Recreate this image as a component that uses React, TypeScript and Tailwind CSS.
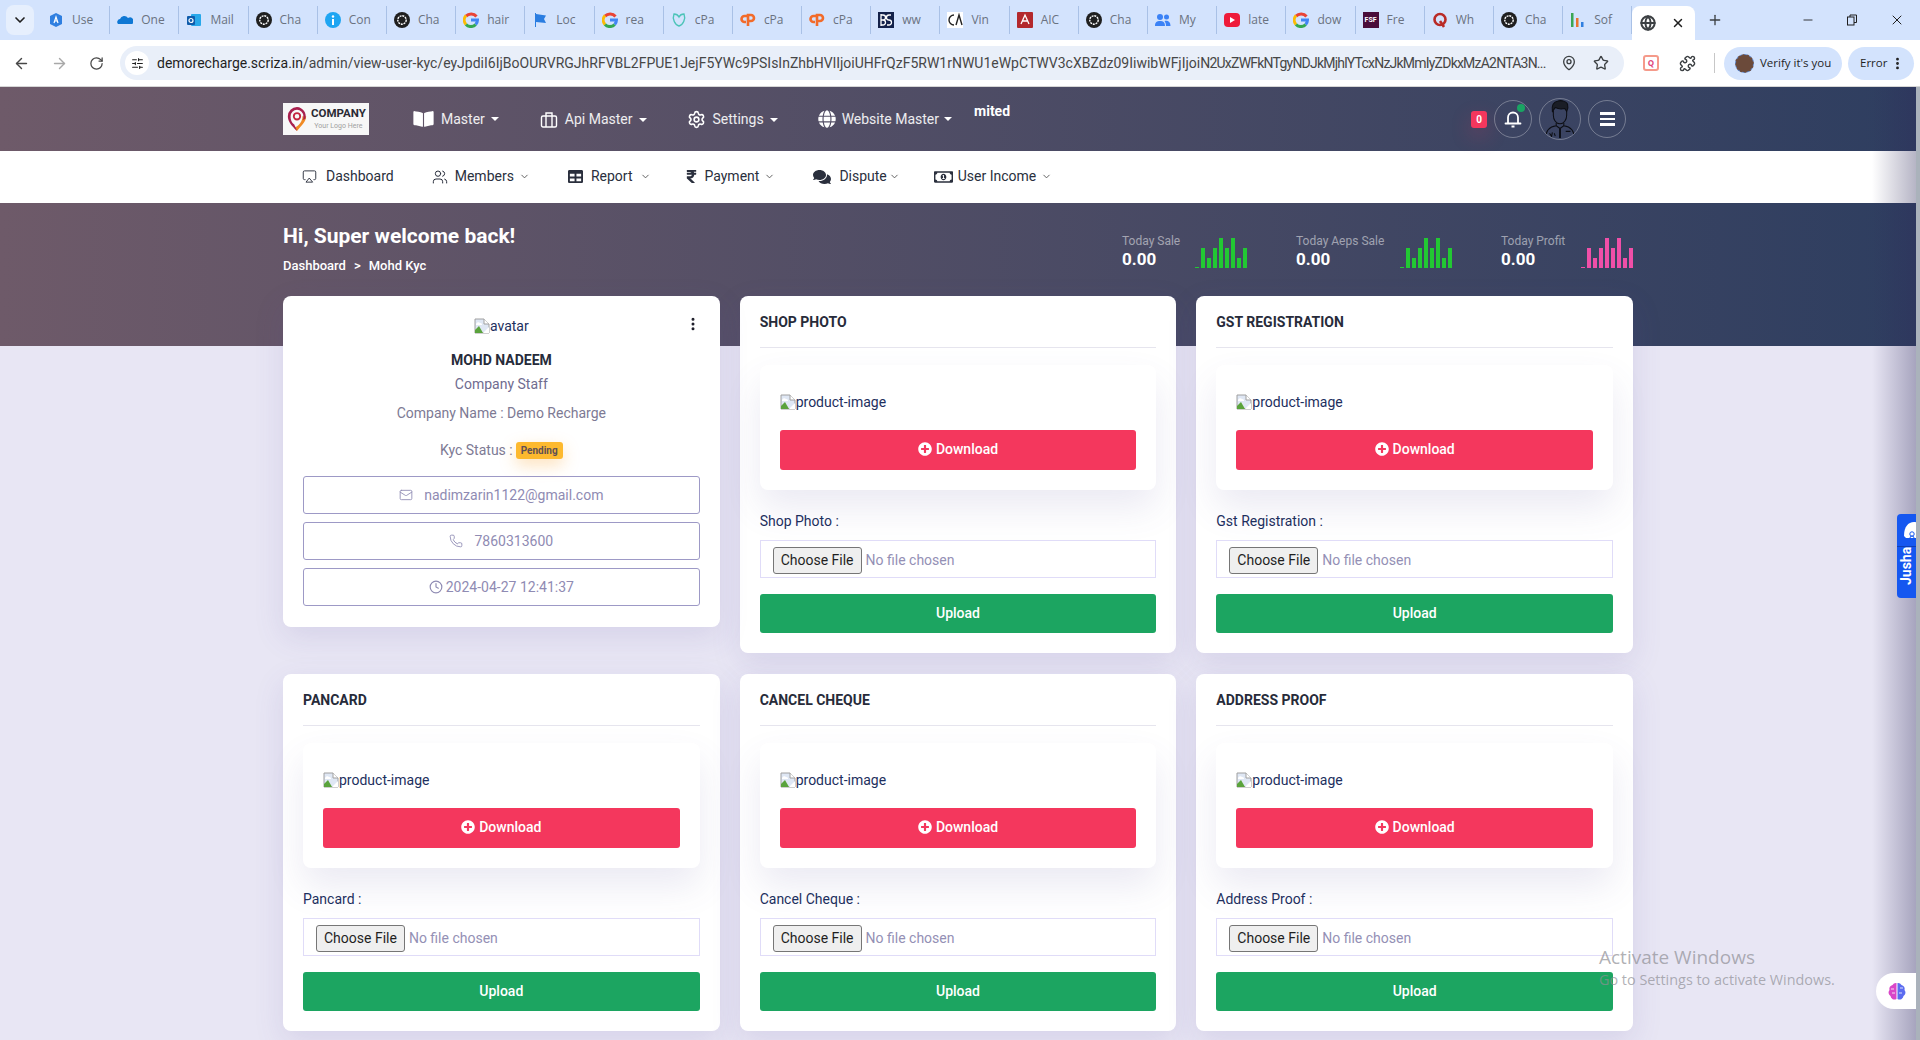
import { ReactNode } from "react";
import {
  Airplay,
  ArrowLeft,
  ArrowRight,
  ChevronDown,
  Clock,
  EllipsisVertical,
  Globe,
  Mail,
  MapPin,
  Minus,
  Phone,
  Plus,
  Puzzle,
  RotateCw,
  Settings,
  SlidersHorizontal,
  Star,
  Users,
  X,
} from "lucide-react";
import {
  FaBookOpen,
  FaComments,
  FaGlobe,
  FaPlusCircle,
  FaRegMoneyBillAlt,
  FaRupeeSign,
  FaTable,
} from "react-icons/fa";

type TabKind =
  | "azure" | "cloud" | "outlook" | "chat" | "info" | "google" | "flag" | "teal" | "cpanel"
  | "bs" | "vinc" | "aica" | "people" | "yt" | "fsf" | "quora" | "bars";

const tabs: { kind: TabKind; label: string }[] = [
  { kind: "azure", label: "Use" },
  { kind: "cloud", label: "One" },
  { kind: "outlook", label: "Mail" },
  { kind: "chat", label: "Cha" },
  { kind: "info", label: "Con" },
  { kind: "chat", label: "Cha" },
  { kind: "google", label: "hair" },
  { kind: "flag", label: "Loc" },
  { kind: "google", label: "rea" },
  { kind: "teal", label: "cPa" },
  { kind: "cpanel", label: "cPa" },
  { kind: "cpanel", label: "cPa" },
  { kind: "bs", label: "ww" },
  { kind: "vinc", label: "Vin" },
  { kind: "aica", label: "AIC" },
  { kind: "chat", label: "Cha" },
  { kind: "people", label: "My" },
  { kind: "yt", label: "late" },
  { kind: "google", label: "dow" },
  { kind: "fsf", label: "Fre" },
  { kind: "quora", label: "Wh" },
  { kind: "chat", label: "Cha" },
  { kind: "bars", label: "Sof" },
];

function Favicon({ kind }: { kind: TabKind }) {
  switch (kind) {
    case "azure":
      return (
        <svg viewBox="0 0 16 16" className="w-4 h-4">
          <path d="M8 1l6 3v8l-6 3-6-3V4z" fill="#2f7fe0" />
          <path d="M6 11l2-6 2 6M6.800 9h2.400" stroke="#fff" strokeWidth="1.200" fill="none" />
        </svg>
      );
    case "cloud":
      return (
        <svg viewBox="0 0 16 16" className="w-4 h-4">
          <path d="M1 12a3 3 0 012-5 4.500 4.500 0 018-1 3.500 3.500 0 014 6z" fill="#0f78d4" />
        </svg>
      );
    case "outlook":
      return (
        <svg viewBox="0 0 16 16" className="w-4 h-4">
          <rect x="5" y="2" width="10" height="12" rx="1" fill="#28a8ea" />
          <rect x="1" y="4" width="8" height="9" rx="1" fill="#0f5cab" />
          <circle cx="5" cy="8.500" r="2" fill="none" stroke="#fff" strokeWidth="1.200" />
        </svg>
      );
    case "chat":
      return (
        <svg viewBox="0 0 16 16" className="w-4 h-4">
          <circle cx="8" cy="8" r="8" fill="#1f1f1f" />
          <circle cx="8" cy="8" r="4.200" fill="none" stroke="#fff" strokeWidth="1.400" strokeDasharray="2 0.800" />
        </svg>
      );
    case "info":
      return (
        <svg viewBox="0 0 16 16" className="w-4 h-4">
          <circle cx="8" cy="8" r="8" fill="#1ea5f2" />
          <rect x="7" y="7" width="2" height="6" fill="#fff" />
          <circle cx="8" cy="4.500" r="1.200" fill="#fff" />
        </svg>
      );
    case "google":
      return (
        <svg viewBox="0 0 16 16" className="w-4 h-4" fill="none" strokeWidth="3">
          <path d="M13.500 4A7 7 0 003 3.600" stroke="#ea4335" transform="translate(0 .5)" />
          <path d="M3 3.600a6.500 6.500 0 000 8.800" stroke="#fbbc05" />
          <path d="M3 12.400a6.500 6.500 0 009.700 0" stroke="#34a853" />
          <path d="M12.700 12.400A6.500 6.500 0 0014.500 8H8" stroke="#4285f4" />
        </svg>
      );
    case "flag":
      return (
        <svg viewBox="0 0 16 16" className="w-4 h-4">
          <path d="M3 1h1v14H3zM4 2l10 1.500-2 3.500 2 4-10-1z" fill="#2a7de1" />
        </svg>
      );
    case "teal":
      return (
        <svg viewBox="0 0 16 16" className="w-4 h-4" fill="none" stroke="#4cc4b8" strokeWidth="1.400">
          <path d="M3 2c-2 5 1 11 5 12 4-1 7-7 5-12-2 0-4 1-5 3-1-2-3-3-5-3z" />
        </svg>
      );
    case "cpanel":
      return (
        <svg viewBox="0 0 16 16" className="w-4 h-4" fill="none" stroke="#f26b2a" strokeWidth="2.600">
          <path d="M7 4H4.500a3 3 0 000 6H6" />
          <path d="M8 14V3h3a3 3 0 010 6H9" />
        </svg>
      );
    case "bs":
      return (
        <svg viewBox="0 0 16 16" className="w-4 h-4">
          <rect width="16" height="16" fill="#14224a" />
          <path d="M3 2v12M3 3h2a2 2 0 010 5H3m0 0h2a2 2 0 010 5H3M13 3h-2a2 2 0 000 5 2 2 0 010 5H9" stroke="#fff" strokeWidth="1.300" fill="none" />
        </svg>
      );
    case "vinc":
      return (
        <svg viewBox="0 0 16 16" className="w-4 h-4">
          <rect width="16" height="16" fill="#fff" />
          <path d="M7 3a5 5 0 100 10M9 13l3-10 3 10" stroke="#222" strokeWidth="1.400" fill="none" />
        </svg>
      );
    case "aica":
      return (
        <svg viewBox="0 0 16 16" className="w-4 h-4">
          <rect width="16" height="16" rx="1" fill="#b3282d" />
          <path d="M4 12l4-9 4 9M5.500 9h5" stroke="#fff" strokeWidth="1.300" fill="none" />
        </svg>
      );
    case "people":
      return (
        <svg viewBox="0 0 16 16" className="w-4 h-4" fill="#3b82f6">
          <circle cx="5" cy="5" r="3" />
          <circle cx="11.500" cy="5" r="2.500" />
          <path d="M0 14c0-4 2-5 5-5s5 1 5 5zM11 14c0-2-.5-3.500-1.500-5 3-.8 6 .5 6 5z" />
        </svg>
      );
    case "yt":
      return (
        <svg viewBox="0 0 16 16" className="w-4 h-4">
          <rect y="1" width="16" height="14" rx="4" fill="#ee1b3a" />
          <path d="M6 5l5 3-5 3z" fill="#fff" />
        </svg>
      );
    case "fsf":
      return (
        <div className="w-4 h-4 bg-[#4a0d3a] text-white text-[7px] font-bold leading-4 text-center font-['Roboto',sans-serif]">FSF</div>
      );
    case "quora":
      return (
        <svg viewBox="0 0 16 16" className="w-4 h-4" fill="none" stroke="#b92b27" strokeWidth="2.600">
          <circle cx="8" cy="7.500" r="5.500" />
          <path d="M8 9l4 6" />
        </svg>
      );
    case "bars":
      return (
        <svg viewBox="0 0 16 16" className="w-4 h-4">
          <rect x="1" y="1" width="2.500" height="14" fill="#3aa655" />
          <rect x="6" y="6" width="2.500" height="9" fill="#e8742c" />
          <rect x="11" y="10" width="2.500" height="5" fill="#2f7fe0" />
        </svg>
      );
  }
}

function Tab({ kind, label }: { kind: TabKind; label: string }) {
  return (
    <div className="w-[69.200px] h-[28px] shrink-0 flex items-center gap-[8px] pl-[7px] border-r border-[#a9c1e6]">
      <div className="shrink-0 w-4 h-4">
        <Favicon kind={kind} />
      </div>
      <span className="text-[12px] text-[#6a7280] whitespace-nowrap">{label}</span>
    </div>
  );
}

function BrowserChrome() {
  return (
    <div className="font-['Open_Sans',sans-serif]">
      <div className="h-[40px] bg-[#d3e3fd] flex items-center">
        <div className="w-[28px] h-[30px] ml-[6px] mr-[7px] bg-[#e6effd] rounded-lg flex items-center justify-center">
          <ChevronDown className="w-4 h-4 text-[#1f1f1f]" strokeWidth={2.500} />
        </div>
        <div className="flex">
          {tabs.map((t, i) => (
            <Tab key={i} kind={t.kind} label={t.label} />
          ))}
        </div>
        <div className="mt-[6px] w-[63px] h-[34px] bg-white rounded-t-lg flex items-center pl-[8px] gap-[15px]">
          <Globe className="w-4 h-4 text-[#3c4043]" strokeWidth={3} />
          <X className="w-[14px] h-[14px] text-[#1f1f1f]" strokeWidth={2.500} />
        </div>
        <Plus className="ml-[12px] w-4 h-4 text-[#3c4043]" />
        <div className="ml-auto flex items-center gap-[31px] pr-[15px] text-[#1f1f1f]">
          <Minus className="w-[14px] h-[14px]" strokeWidth={1.500} />
          <svg viewBox="0 0 12 12" className="w-[12px] h-[12px]" fill="none" stroke="currentColor">
            <rect x="1.500" y="3" width="6.500" height="8" />
            <path d="M4 3V1h6.500v7.500H8" />
          </svg>
          <X className="w-4 h-4" strokeWidth={1.500} />
        </div>
      </div>
      <div className="h-[47px] bg-white flex items-center border-b border-[#d6d6d6]">
        <div className="w-[120px] shrink-0 flex items-center gap-[21px] pl-[13px] text-[#474747]">
          <ArrowLeft className="w-[17px] h-[17px]" strokeWidth={2} />
          <ArrowRight className="w-[17px] h-[17px] text-[#a8a8a8]" strokeWidth={2} />
          <RotateCw className="w-[15px] h-[15px]" strokeWidth={2} />
        </div>
        <div className="w-[1504px] h-[34px] bg-[#e9eff9] rounded-full flex items-center pl-[5px] pr-[14px]">
          <div className="w-[24px] h-[24px] rounded-full bg-white flex items-center justify-center shrink-0">
            <SlidersHorizontal className="w-[13px] h-[13px] text-[#1f1f1f]" />
          </div>
          <div className="ml-[8px] w-[1388px] shrink-0 text-[14px] text-[#1f1f1f] whitespace-nowrap font-['Roboto',sans-serif]">
            demorecharge.scriza.in<span className="text-[#474747]">/admin/view-user-kyc/eyJpdiI6IjBoOURVRGJhRFVBL2FPUE1JejF5YWc9PSIsInZhbHVlIjoiUHFrQzF5RW1rNWU1eWpCTWV3cXBZdz09IiwibWFjIjoi<span className="tracking-[-0.780px]">N2UxZWFkNTgyNDJkMjhlYTcxNzJkMmIyZDkxMzA2NTA3N...</span></span>
          </div>
          <MapPin className="ml-[16px] w-4 h-4 text-[#3c4043] shrink-0" />
          <Star className="ml-[16px] w-4 h-4 text-[#3c4043] shrink-0" />
        </div>
        <div className="ml-[19px] w-[16px] h-[16px] rounded-[3px] border-2 border-[#f59a8a] flex items-center justify-center text-[8px] font-bold text-[#e0457b]">Q</div>
        <Puzzle className="ml-[20px] w-[17px] h-[17px] text-[#3c4043]" />
        <div className="ml-[18px] w-px h-[20px] bg-[#c7c7c7]" />
        <div className="ml-[9px] w-[118px] h-[33px] rounded-full bg-[#d3e3fd] flex items-center pl-[11px] gap-[6px]">
          <div className="w-[19px] h-[19px] rounded-full bg-[#6b4a3a] border border-dashed border-[#5a7fc0]" />
          <span className="text-[11.500px] text-[#1f1f1f] whitespace-nowrap">Verify it's you</span>
        </div>
        <div className="ml-[6px] w-[66px] h-[33px] rounded-full bg-[#d3e3fd] flex items-center pl-[12px] gap-[3px]">
          <span className="text-[11.500px] text-[#1f1f1f]">Error</span>
          <EllipsisVertical className="w-[15px] h-[15px] text-[#1f1f1f]" strokeWidth={2.500} />
        </div>
      </div>
    </div>
  );
}

function TopLink({ icon, label, gap }: { icon: ReactNode; label: string; gap: string }) {
  return (
    <div className={`flex items-center ${gap} text-[14px] text-white/90`}>
      {icon}
      <span>{label}</span>
      <span className="-ml-[1px] w-0 h-0 border-x-[4px] border-x-transparent border-t-[4px] border-t-white" />
    </div>
  );
}

function CompanyLogo() {
  return (
    <div className="w-[86px] h-[32px] bg-[#f7f7f7] flex items-center pl-[3px] gap-[3px]">
      <svg viewBox="0 0 24 28" className="w-[22px] h-[26px] shrink-0">
        <path d="M22 11c0 6-5 10-10 16l-3-3c5-3 9-7 9-13z" fill="#f08a24" />
        <path d="M12 1a10 10 0 00-10 10c0 5 3 9 7 13l3 3c-1-3-2-5-3-7-3-2-4-5-4-9a7 7 0 0114 0c0 2 0 3-1 4l3-1a10 10 0 00-9-13z" fill="#a81f4e" />
        <circle cx="12" cy="11" r="3.500" fill="none" stroke="#c4243f" strokeWidth="2" />
      </svg>
      <div className="flex flex-col items-center leading-none">
        <span className="text-[11.500px] font-bold text-[#2a2a34]">COMPANY</span>
        <span className="text-[7px] text-[#a0a0a0] mt-[3px]">Your Logo Here</span>
      </div>
    </div>
  );
}

function ApiIcon() {
  return (
    <svg viewBox="0 0 18 18" className="w-[18px] h-[18px] text-white" fill="none" stroke="currentColor" strokeWidth="1.400">
      <rect x="1.500" y="5" width="15" height="11" rx="1.500" />
      <path d="M6 5V2h6v3M6 5v11M12 5v11" />
    </svg>
  );
}

function BellIcon() {
  return (
    <svg viewBox="0 0 20 20" className="w-[20px] h-[20px] text-white" fill="none" stroke="currentColor">
      <path d="M5 14V8.500a5 5 0 0110 0V14" strokeWidth="1.800" />
      <path d="M2.500 14.500h15" strokeWidth="1.800" strokeLinecap="round" />
      <path d="M8.500 17.500h3" strokeWidth="2" />
    </svg>
  );
}

function HeaderAvatar() {
  return (
    <svg viewBox="0 0 42 42" className="w-full h-full" fill="none" stroke="#0c0e14" strokeWidth="1.100">
      <path d="M14 12v5c0 5 3 9 7 9s7-4 7-9v-5" />
      <path d="M13 13c-1-6 1-10 6-11 4-1 10 1 10 4 1 3 0 5-1 7l-2-3c-4 1-8 0-10-1z" fill="#1a1d26" />
      <path d="M17 25v3l4 3 4-3v-3M6 41c0-8 3-12 11-13M36 41c0-8-3-12-11-13" />
      <path d="M21 31v10" strokeWidth="2" />
      <path d="M10 36l2 3M13 35l-1 5M15 36l1 3M27 34h5" />
    </svg>
  );
}

const navItems: { icon: ReactNode; label: string; ml: string; gap: string; chevron: string }[] = [
  { icon: <Airplay className="w-[15px] h-[15px]" strokeWidth={1.500} />, label: "Dashboard", ml: "ml-[19px]", gap: "gap-[9px]", chevron: "" },
  { icon: <Users className="w-[16px] h-[16px]" strokeWidth={1.500} />, label: "Members", ml: "ml-[38px]", gap: "gap-[7px]", chevron: "-ml-[2px]" },
  { icon: <FaTable className="w-[15px] h-[15px]" />, label: "Report", ml: "ml-[38px]", gap: "gap-[8px]", chevron: "ml-0" },
  { icon: <FaRupeeSign className="w-[11px] h-[15px]" />, label: "Payment", ml: "ml-[35px]", gap: "gap-[7px]", chevron: "-ml-[2px]" },
  { icon: <FaComments className="w-[18px] h-[16px]" />, label: "Dispute", ml: "ml-[38px]", gap: "gap-[8px]", chevron: "-ml-[6px]" },
  { icon: <FaRegMoneyBillAlt className="w-[19px] h-[16px]" />, label: "User Income", ml: "ml-[34px]", gap: "gap-[5px]", chevron: "ml-0" },
];

function NavBars() {
  return (
    <>
      <div className="h-[64px] bg-linear-to-r from-[#6e5a69] to-[#2e3e60] flex items-center pl-[283px] relative">
        <CompanyLogo />
        <div className="ml-[44px] flex items-center">
          <TopLink icon={<FaBookOpen className="w-[21px] h-[18px] text-white" />} label="Master" gap="gap-[7px]" />
          <div className="ml-[41px] mt-[1px]">
            <TopLink icon={<ApiIcon />} label="Api Master" gap="gap-[7px]" />
          </div>
          <div className="ml-[40px] mt-[1px]">
            <TopLink icon={<Settings className="w-[19px] h-[19px] text-white" strokeWidth={2} />} label="Settings" gap="gap-[7px]" />
          </div>
          <div className="ml-[40px]">
            <TopLink icon={<FaGlobe className="w-[18px] h-[18px] text-white" />} label="Website Master" gap="gap-[6px]" />
          </div>
          <span className="ml-[22px] -mt-[16px] text-[14px] font-bold text-white">mited</span>
        </div>
        <div className="absolute left-[1471px] top-[24px] w-[16px] h-[17px] rounded-[3px] bg-[#f4375d] text-white text-[10px] font-bold flex items-center justify-center shadow-[0_8px_20px_rgba(244,55,93,0.25)]">0</div>
        <div className="absolute left-[1494px] top-[13px] w-[38px] h-[38px] rounded-full border border-white/30 flex items-center justify-center">
          <BellIcon />
          <span className="absolute right-[6px] top-[3px] w-[8px] h-[8px] rounded-full bg-[#1aa463]" />
        </div>
        <div className="absolute left-[1539px] top-[11px] w-[42px] h-[42px] rounded-full border border-white/30 overflow-hidden">
          <HeaderAvatar />
        </div>
        <div className="absolute left-[1588px] top-[13px] w-[38px] h-[38px] rounded-full border border-white/30 flex flex-col items-center justify-center gap-[3px]">
          <span className="w-[15px] h-[2.500px] bg-white" />
          <span className="w-[15px] h-[2.500px] bg-white" />
          <span className="w-[15px] h-[2.500px] bg-white" />
        </div>
      </div>
      <div className="h-[52px] bg-white flex items-center pl-[283px] pb-[1px] text-[14px] text-[#2a2f3d]">
        {navItems.map((n) => (
          <div key={n.label} className={`flex items-center ${n.ml} ${n.gap}`}>
            {n.icon}
            <span>{n.label}</span>
            {n.chevron && <ChevronDown className={`w-[11px] h-[11px] ${n.chevron} text-[#555]`} strokeWidth={2} />}
          </div>
        ))}
      </div>
    </>
  );
}

const barHeights = [1, 20, 10, 20, 30, 20, 30, 10, 20];

function MiniBars({ color }: { color: string }) {
  return (
    <div className="flex items-end gap-[2px] h-[30px]">
      {barHeights.map((h, i) => (
        <div key={i} className={`w-[4px] ${color}`} style={{ height: h }} />
      ))}
    </div>
  );
}

function Stat({ label, color, w }: { label: string; color: string; w: string }) {
  return (
    <div className={`flex items-end ${w}`}>
      <div className="flex-1 pl-[1px] -mb-[1px]">
        <div className="text-[12px] leading-[14px] text-white/50">{label}</div>
        <div className="text-[17px] leading-[20px] font-bold text-white mt-[1px]">0.00</div>
      </div>
      <MiniBars color={color} />
    </div>
  );
}

function Hero() {
  return (
    <div className="h-[143px] bg-linear-to-r from-[#6e5a69] to-[#2e3e60] flex justify-between pl-[283px] pr-[287px]">
      <div>
        <h1 className="mt-[20px] text-[21px] leading-[26px] font-bold text-white">Hi, Super welcome back!</h1>
        <div className="mt-[8px] text-[13px] leading-[18px] font-medium text-white flex gap-2">
          <span>Dashboard</span>
          <span>&gt;</span>
          <span>Mohd Kyc</span>
        </div>
      </div>
      <div className="mt-[35px] h-[30px] flex gap-[48px]">
        <Stat label="Today Sale" color="bg-[#22c833]" w="w-[126px]" />
        <Stat label="Today Aeps Sale" color="bg-[#22c833]" w="w-[157px]" />
        <Stat label="Today Profit" color="bg-[#f04fa8]" w="w-[133px]" />
      </div>
    </div>
  );
}

function BrokenImage({ alt }: { alt: string }) {
  return (
    <div className="flex items-center text-[14px] text-[#1d2f5e] leading-[16px]">
      <svg viewBox="0 0 16 16" className="w-4 h-4 shrink-0">
        <path d="M1 1h9l5 5v9H1z" fill="#dfe7f4" stroke="#a0a0a0" />
        <path d="M1 12l4-4 4 7H1z" fill="#5aa33c" />
        <path d="M2 6c1-2 3-2 4-1 2 0 2 1 2 2H2z" fill="#fff" />
        <path d="M10 1v5h5" fill="#fff" stroke="#a0a0a0" />
        <path d="M15 15l-6 0 6-6z" fill="#fff" />
      </svg>
      <span>{alt}</span>
    </div>
  );
}

function InfoButton({ icon, text, gap }: { icon: ReactNode; text: string; gap: string }) {
  return (
    <div className={`h-[38px] border border-[#9d99c6] rounded-[3px] flex items-center justify-center ${gap} text-[14px] text-[#8f8bb3]`}>
      {icon}
      <span>{text}</span>
    </div>
  );
}

function ProfileCard() {
  return (
    <div className="self-start h-[331px] bg-white rounded-[8px] shadow-[0_10px_30px_rgba(90,80,160,0.13)] px-[20px] relative">
      <EllipsisVertical className="absolute right-[19px] top-[20px] w-[16px] h-[16px] text-[#1c1c28]" strokeWidth={2.500} />
      <div className="pt-[22px] flex justify-center">
        <BrokenImage alt="avatar" />
      </div>
      <div className="mt-[16px] text-center text-[14px] leading-[20px] font-bold text-[#272b3a]">MOHD NADEEM</div>
      <div className="mt-[4px] text-center text-[14px] leading-[20px] text-[#6f6c90]">Company Staff</div>
      <div className="mt-[9px] text-center text-[14px] leading-[20px] text-[#7d7a94]">Company Name : Demo Recharge</div>
      <div className="mt-[17px] flex justify-center items-center text-[14px] leading-[20px] text-[#7d7a94]">
        <span>Kyc Status :</span>
        <span className="ml-[3px] mt-[1px] h-[17px] px-[5px] rounded-[3px] bg-[#fdb92e] text-[#5f4f55] text-[10px] font-bold flex items-center shadow-[0_6px_16px_rgba(250,170,60,0.35)]">Pending</span>
      </div>
      <div className="mt-[16px] flex flex-col gap-[8px]">
        <InfoButton icon={<Mail className="w-[14px] h-[14px]" strokeWidth={1.500} />} text="nadimzarin1122@gmail.com" gap="gap-[11px]" />
        <InfoButton icon={<Phone className="w-[14px] h-[14px]" strokeWidth={1.500} />} text="7860313600" gap="gap-[11px]" />
        <InfoButton icon={<Clock className="w-[14px] h-[14px]" strokeWidth={2} />} text="2024-04-27 12:41:37" gap="gap-[3px]" />
      </div>
    </div>
  );
}

function DocCard({ title, label }: { title: string; label: string }) {
  return (
    <div className="h-[357px] bg-white rounded-[8px] shadow-[0_10px_30px_rgba(90,80,160,0.13)] px-[20px]">
      <div className="h-[52px] border-b border-[#e6e5ee] flex items-center pt-[2px]">
        <h3 className="text-[14px] font-bold text-[#272b3a]">{title}</h3>
      </div>
      <div className="mt-[17px] h-[125px] rounded-[8px] bg-white shadow-[0_18px_36px_rgba(90,80,160,0.12)] px-[20px] pt-[29px]">
        <BrokenImage alt="product-image" />
        <button className="mt-[20px] w-full h-[40px] pb-[2px] rounded-[3px] bg-[#f4375d] text-white text-[14px] font-medium flex items-center justify-center gap-[4px]">
          <FaPlusCircle className="w-[14px] h-[14px]" />
          Download
        </button>
      </div>
      <div className="mt-[21px] text-[14px] leading-[20px] text-[#1d2f5e]">{label}</div>
      <input
        type="file"
        className="mt-[9px] block w-full h-[38px] border border-[#e0dcf8] bg-white pl-[12px] pt-[6px] text-[14px] text-[#9490b5] file:mr-[4px] file:h-[27px] file:px-[7px] file:border file:border-[#767676] file:rounded-[3px] file:bg-[#efefef] file:text-[#1f1f1f]"
      />
      <button className="mt-[16px] w-full h-[39px] pb-[1px] rounded-[3px] bg-[#1ca561] text-white text-[14px] font-medium">Upload</button>
    </div>
  );
}

export default function App() {
  return (
    <div className="relative w-[1920px] h-[1040px] overflow-hidden bg-[#e8e6f4] font-['Roboto',sans-serif]">
      <BrowserChrome />
      <NavBars />
      <Hero />
      <div className="-mt-[50px] w-[1350px] ml-[283px] grid grid-cols-3 gap-x-[20px] gap-y-[21px]">
        <ProfileCard />
        <DocCard title="SHOP PHOTO" label="Shop Photo :" />
        <DocCard title="GST REGISTRATION" label="Gst Registration :" />
        <DocCard title="PANCARD" label="Pancard :" />
        <DocCard title="CANCEL CHEQUE" label="Cancel Cheque :" />
        <DocCard title="ADDRESS PROOF" label="Address Proof :" />
      </div>

      {/* edge shadow and scrollbar strip */}
      <div className="absolute right-[4px] top-[87px] bottom-0 w-[44px] bg-linear-to-l from-[#2e2a5a]/35 to-transparent pointer-events-none" />
      <div className="absolute right-0 top-[87px] bottom-0 w-[4px] bg-[#aab2bb]" />

      {/* floating widgets */}
      <div className="absolute left-[1897px] top-[514px] w-[19px] h-[84px] rounded-l-[4px] bg-[#1557f0] overflow-hidden">
        <div className="h-[33px] border-b border-[#0e3fb5] pl-[7px] pt-[8px]">
          <svg viewBox="0 0 16 18" className="w-[16px] h-[18px]">
            <path d="M0 14C0 5 4 0 10 0c4 0 6 3 6 6v10H2z" fill="#fff" />
            <circle cx="8" cy="12" r="2.200" fill="none" stroke="#1557f0" strokeWidth="1" />
            <circle cx="8" cy="16" r="2" fill="none" stroke="#1557f0" strokeWidth="1" />
          </svg>
        </div>
        <div className="[writing-mode:vertical-rl] rotate-180 text-white text-[14px] font-bold h-[46px] w-[26px] -ml-[1px] pt-[8px] whitespace-nowrap">Jusha</div>
      </div>
      <div className="absolute left-[1876px] top-[973px] w-[40px] h-[36px] rounded-l-full bg-white flex items-center pl-[11px]">
        <svg viewBox="0 0 20 20" className="w-[20px] h-[20px]">
          <path d="M9.500 2a4 4 0 00-4 2 4 4 0 00-3 5 4 4 0 001 6 4 4 0 006 3z" fill="#d946c8" />
          <path d="M10.500 2a4 4 0 014 2 4 4 0 013 5 4 4 0 01-1 6 4 4 0 01-6 3z" fill="#5b6cf0" />
          <path d="M4 8h3M5 12h3M13 7h3M12 12h3" stroke="#fff" strokeWidth="0.800" />
        </svg>
      </div>
      <div className="absolute left-[1599px] top-[944px] text-[#8e8e94]/70 font-['Open_Sans',sans-serif] pointer-events-none">
        <div className="text-[19px] leading-[26px]">Activate Windows</div>
        <div className="text-[14.400px] leading-[18px] mt-[1px]">Go to Settings to activate Windows.</div>
      </div>
    </div>
  );
}
